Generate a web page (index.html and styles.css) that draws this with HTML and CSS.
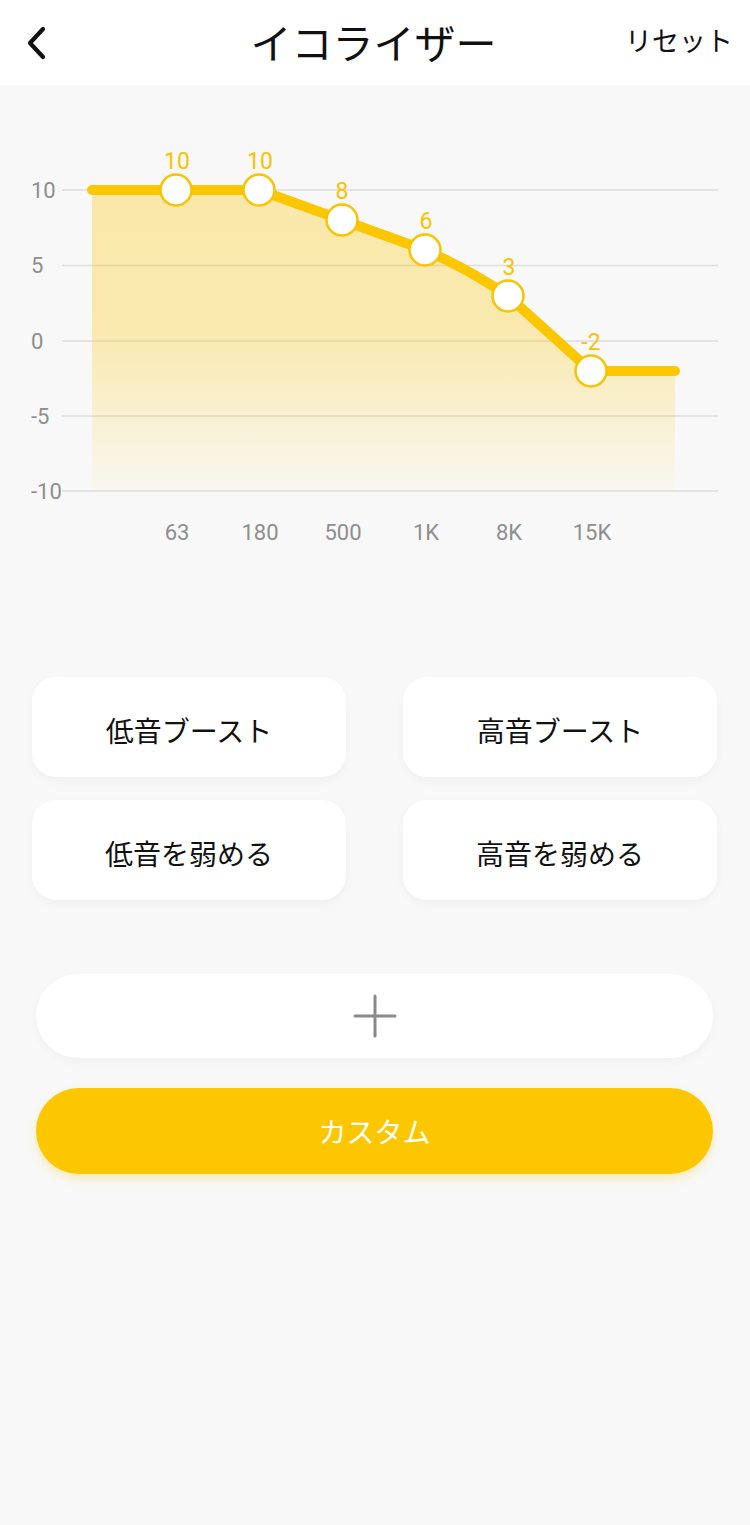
FILE: index.html
```html
<!DOCTYPE html>
<html lang="ja">
<head>
<meta charset="utf-8">
<title>イコライザー</title>
<link rel="stylesheet" href="styles.css">
</head>
<body>
<header class="topbar">
  <div class="back">
    <svg width="30" height="40" viewBox="0 0 30 40"><path d="M19 6 L6 20 L19 34" fill="none" stroke="#111" stroke-width="4.2" stroke-linecap="round" stroke-linejoin="round"/></svg>
  </div>
  <h1 class="title">イコライザー</h1>
  <div class="reset">リセット</div>
</header>
<main class="main">
  <svg class="chart" width="750" height="515" viewBox="0 85 750 515">
    <defs>
      <linearGradient id="fillg" x1="0" y1="190" x2="0" y2="491" gradientUnits="userSpaceOnUse">
        <stop offset="0" stop-color="#fcc600" stop-opacity="0.32"/>
        <stop offset="0.45" stop-color="#fcc600" stop-opacity="0.3"/>
        <stop offset="1" stop-color="#fcc600" stop-opacity="0.03"/>
      </linearGradient>
    </defs>
    <g class="grid">
      <line x1="62" y1="190" x2="718" y2="190"/>
      <line x1="62" y1="265.5" x2="718" y2="265.5"/>
      <line x1="62" y1="341" x2="718" y2="341"/>
      <line x1="62" y1="416" x2="718" y2="416"/>
      <line x1="62" y1="491" x2="718" y2="491"/>
    </g>
    <g class="ylab">
      <text x="31" y="197.5">10</text>
      <text x="31" y="273">5</text>
      <text x="31" y="348.5">0</text>
      <text x="31" y="423.5">-5</text>
      <text x="31" y="498.5">-10</text>
    </g>
    <path d="M92,190 L259,190 L342,220 L425,250 Q470,270 508,296 L591,371 L675,371 L675,491 L92,491 Z" fill="url(#fillg)"/>
    <path class="curve" d="M92,190 L259,190 L342,220 L425,250 Q470,270 508,296 L591,371 L675,371"/>
    <g class="pts">
      <circle cx="176" cy="190" r="15.5"/>
      <circle cx="259" cy="190" r="15.5"/>
      <circle cx="342" cy="220" r="15.5"/>
      <circle cx="425" cy="250" r="15.5"/>
      <circle cx="508" cy="296" r="15.5"/>
      <circle cx="591" cy="371" r="15.5"/>
    </g>
    <g class="vlab">
      <text x="177" y="169">10</text>
      <text x="260" y="169">10</text>
      <text x="342" y="199">8</text>
      <text x="426" y="229">6</text>
      <text x="509" y="275">3</text>
      <text x="591" y="350">-2</text>
    </g>
    <g class="xlab">
      <text x="177" y="540">63</text>
      <text x="260" y="540">180</text>
      <text x="343" y="540">500</text>
      <text x="426" y="540">1K</text>
      <text x="509" y="540">8K</text>
      <text x="592" y="540">15K</text>
    </g>
  </svg>
  <section class="presets">
    <button class="preset">低音ブースト</button>
    <button class="preset">高音ブースト</button>
    <button class="preset">低音を弱める</button>
    <button class="preset">高音を弱める</button>
  </section>
  <button class="add" aria-label="追加">
    <svg width="44" height="44" viewBox="0 0 44 44"><path d="M22 2 V42 M2 22 H42" stroke="#8a8a8a" stroke-width="3" stroke-linecap="round"/></svg>
  </button>
  <button class="custom">カスタム</button>
</main>
</body>
</html>
```
FILE: styles.css
```css
* { box-sizing: border-box; }
html, body { margin: 0; padding: 0; }
body {
  width: 750px;
  min-height: 1525px;
  background: #f8f8f8;
  font-family: "Noto Sans CJK JP", "Noto Sans", sans-serif;
  color: #111;
}
.topbar {
  height: 85px;
  background: #fff;
  display: grid;
  grid-template-columns: 1fr auto 1fr;
  align-items: center;
  padding: 0 17px 0 24px;
}
.back { display: flex; align-items: center; height: 40px; }
.title {
  margin: 0;
  font-size: 41px;
  font-weight: 400;
  line-height: 1;
  position: relative;
  top: -1px;
  left: -5px;
  letter-spacing: 0;
}
.reset {
  justify-self: end;
  font-size: 27px;
  line-height: 1;
  position: relative;
  top: -3px;
}
.main { display: flex; flex-direction: column; }
.chart { display: block; }
.grid line { stroke: #dddddd; stroke-width: 1.5; }
.ylab text, .xlab text {
  font-family: Roboto, "Liberation Sans", sans-serif;
  font-size: 22px;
  fill: #8e8e8e;
}
.xlab text, .vlab text { text-anchor: middle; }
.vlab text {
  font-family: Roboto, "Liberation Sans", sans-serif;
  font-size: 23px;
  fill: #f9c300;
}
.curve {
  fill: none;
  stroke: #fcc600;
  stroke-width: 10;
  stroke-linecap: round;
  stroke-linejoin: round;
}
.pts circle { fill: #fff; stroke: #f9c300; stroke-width: 2.5; }
.presets {
  margin-top: 77px;
  padding: 0 33px 0 32px;
  display: grid;
  grid-template-columns: 314px 314px;
  column-gap: 57px;
  row-gap: 23px;
}
button { font-family: inherit; border: 0; cursor: pointer; }
.preset {
  height: 100px;
  background: #fff;
  border-radius: 24px;
  font-size: 28px;
  color: #111;
  box-shadow: 0 4px 10px rgba(0, 0, 0, 0.035);
  padding: 5px 0 0;
}
.add {
  margin: 74px 37px 0 36px;
  height: 84px;
  background: #fff;
  border-radius: 42px;
  display: flex;
  align-items: center;
  justify-content: center;
  box-shadow: 0 4px 10px rgba(0, 0, 0, 0.035);
}
.add svg { display: block; }
.custom {
  margin: 30px 37px 0 36px;
  height: 86px;
  background: #fcc700;
  border-radius: 43px;
  font-size: 28px;
  color: #fff;
  box-shadow: 0 5px 10px rgba(252, 199, 0, 0.25);
}
```
